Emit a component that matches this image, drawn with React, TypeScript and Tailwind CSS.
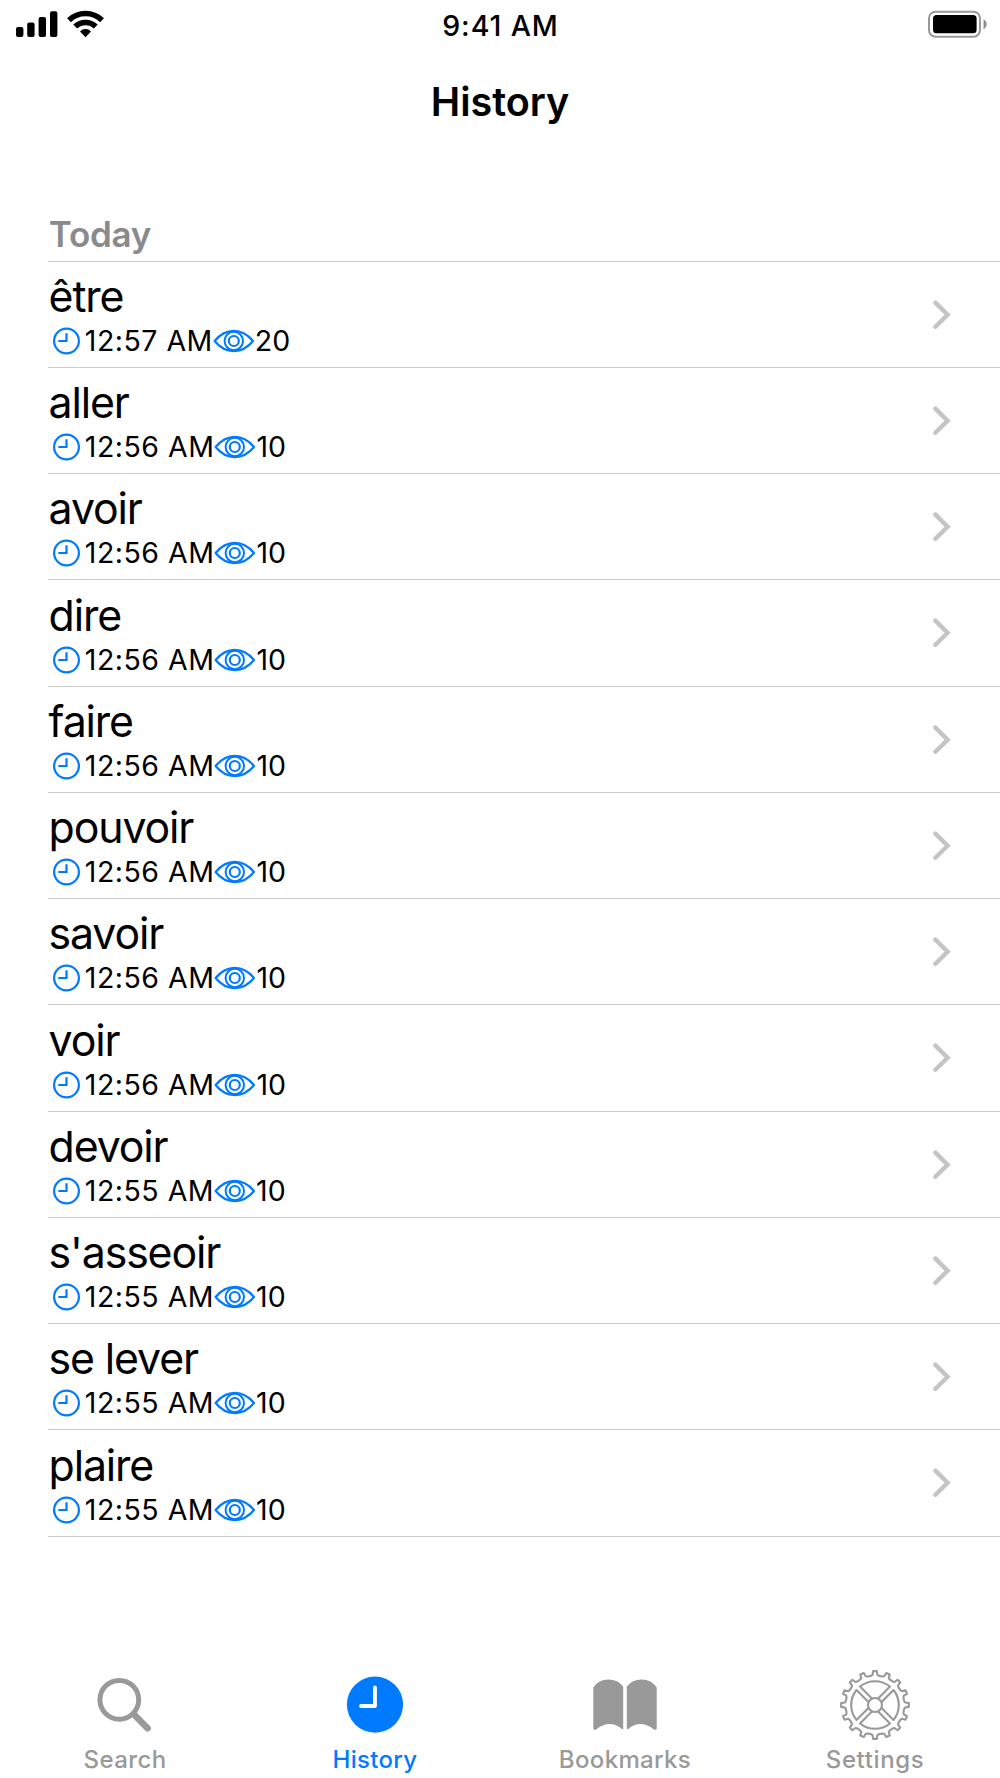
import React from "react";

type Entry = { word: string; time: string; views: number };

const entries: Entry[] = [
  { word: "être", time: "12:57 AM", views: 20 },
  { word: "aller", time: "12:56 AM", views: 10 },
  { word: "avoir", time: "12:56 AM", views: 10 },
  { word: "dire", time: "12:56 AM", views: 10 },
  { word: "faire", time: "12:56 AM", views: 10 },
  { word: "pouvoir", time: "12:56 AM", views: 10 },
  { word: "savoir", time: "12:56 AM", views: 10 },
  { word: "voir", time: "12:56 AM", views: 10 },
  { word: "devoir", time: "12:55 AM", views: 10 },
  { word: "s'asseoir", time: "12:55 AM", views: 10 },
  { word: "se lever", time: "12:55 AM", views: 10 },
  { word: "plaire", time: "12:55 AM", views: 10 },
];

function SignalIcon() {
  return (
    <svg width="42" height="28" viewBox="0 0 42 28" fill="#000">
      <rect x="0" y="17" width="7.4" height="10" rx="2" />
      <rect x="11.2" y="12.5" width="7.4" height="14.5" rx="2" />
      <rect x="22.6" y="7" width="7.4" height="20" rx="2" />
      <rect x="34" y="1.3" width="7.4" height="25.7" rx="2" />
    </svg>
  );
}

function WifiIcon() {
  return (
    <svg width="38" height="28" viewBox="0 0 38 28" fill="none" stroke="#000">
      <path d="M3 10.2A23.5 23.5 0 0 1 36 10.2" strokeWidth="5.6" />
      <path d="M9.2 16.6A14.8 14.8 0 0 1 29.8 16.6" strokeWidth="5.6" />
      <path d="M19.5 27.2L14 21.4Q16.2 19 19.5 19Q22.800 19 25 21.4Z" fill="#000" stroke="none" />
    </svg>
  );
}

function BatteryIcon() {
  return (
    <svg width="60" height="28" viewBox="0 0 60 28">
      <rect x="2" y="1.7" width="51" height="25" rx="6.5" fill="none" stroke="#999" strokeWidth="2" />
      <rect x="6" y="5" width="43.6" height="18.2" rx="3.5" fill="#000" />
      <path d="M56.5 9.2Q59.6 10.8 59.6 14.2Q59.6 17.6 56.5 19.2Z" fill="#8e8e8e" />
    </svg>
  );
}

function ClockIcon() {
  return (
    <svg width="28" height="28" viewBox="0 0 28 28" fill="none" stroke="#007aff" strokeWidth="2.2">
      <circle cx="13.5" cy="14" r="12.4" />
      <path d="M13.5 6.2V14H5.3" />
    </svg>
  );
}

function EyeIcon() {
  return (
    <svg width="42" height="24" viewBox="0 0 42 24" fill="none" stroke="#007aff" strokeWidth="2.2">
      <path d="M1.6 12C7.5 5 14 1.9 20.8 1.9S34.3 5 40 12C34.3 19 27.8 22.1 20.8 22.1S7.3 19 1.6 12Z" strokeLinejoin="round" />
      <circle cx="20.8" cy="12" r="9.2" strokeWidth="2" />
      <circle cx="20.8" cy="12" r="5" />
    </svg>
  );
}

function ChevronIcon() {
  return (
    <svg width="18" height="30" viewBox="0 0 18 30" fill="none" stroke="#c4c4c6" strokeWidth="4.4" strokeLinecap="round" strokeLinejoin="miter">
      <path d="M2.4 2.6L14.6 14.7L2.4 26.8" />
    </svg>
  );
}

function SearchIcon() {
  return (
    <svg width="72" height="72" viewBox="0 0 72 72" fill="none" stroke="#999">
      <circle cx="30.3" cy="30.8" r="19.4" strokeWidth="5" />
      <path d="M45 45.5L58.6 59.2" strokeWidth="6.6" strokeLinecap="round" />
    </svg>
  );
}

function HistoryIcon() {
  return (
    <svg width="72" height="72" viewBox="0 0 72 72" fill="none">
      <circle cx="36" cy="35.6" r="28.1" fill="#007aff" />
      <path d="M36 18.5V37H22" stroke="#fff" strokeWidth="3.8" strokeLinecap="round" strokeLinejoin="round" />
    </svg>
  );
}

function BookIcon() {
  return (
    <svg width="72" height="72" viewBox="0 0 72 72" fill="#999">
      <path d="M4.3 18.5Q9.5 10.4 19.3 10.4T34.2 17.5V60Q33.8 60.8 32.6 59.8Q27 55 20.8 55Q13.5 55 7.2 60.5Q4.3 61.3 4.3 59.2Z" />
      <path d="M67.7 18.5Q62.5 10.4 52.7 10.4T37.8 17.5V60Q38.2 60.8 39.4 59.8Q45 55 51.2 55Q58.5 55 64.8 60.5Q67.7 61.3 67.7 59.2Z" />
    </svg>
  );
}

const TEETH = 16;

/** Closed outline with evenly spaced teeth, starting from the top. */
const gearOutline = (() => {
  const corners: [number, number][] = [
    [-8, 29.4],
    [-4.6, 30.2],
    [-3.2, 33.9],
    [3.2, 33.9],
    [4.6, 30.2],
    [8, 29.4],
  ];
  const points: string[] = [];
  for (let i = 0; i < TEETH; i++) {
    for (const [offset, radius] of corners) {
      const angle = ((i * (360 / TEETH) + offset - 90) * Math.PI) / 180;
      points.push(`${(36 + radius * Math.cos(angle)).toFixed(2)} ${(36 + radius * Math.sin(angle)).toFixed(2)}`);
    }
  }
  return `M${points.join("L")}Z`;
})();

function GearIcon() {
  return (
    <svg width="72" height="72" viewBox="0 0 72 72" fill="none" stroke="#999" strokeWidth="2.1" strokeLinejoin="round">
      <path d={gearOutline} />
      <circle cx="36" cy="36" r="7" />
      {[0, 90, 180, 270].map((turn) => (
        <path
          key={turn}
          transform={`rotate(${turn} 36 36)`}
          d="M38.8 29.7L51 17.500A23.8 23.8 0 0 0 21 17.500L33.2 29.7"
        />
      ))}
    </svg>
  );
}

function HistoryRow({ word, time, views }: Entry) {
  return (
    <li className="flex h-[106.25px] items-start justify-between border-b border-[#cccccc] pr-[49px]">
      <div className="pt-[12.2px]">
        <div className="pl-[0.6px] text-[42.8px] leading-[46px] tracking-[-1.12px]">{word}</div>
        <div className="mt-[4px] flex h-[34px] items-center pl-[4.5px] text-[28.5px] leading-[34px] tracking-[0.5px]">
          <span className="w-[32.3px] shrink-0">
            <ClockIcon />
          </span>
          <span>{time}</span>
          <span className="shrink-0">
            <EyeIcon />
          </span>
          <span className="tracking-[0px]">{views}</span>
        </div>
      </div>
      <span className="mt-[38px]">
        <ChevronIcon />
      </span>
    </li>
  );
}

function Tab({ label, active, tracking, icon }: { label: string; active?: boolean; tracking: string; icon: React.ReactNode }) {
  return (
    <button className={`flex flex-col items-center ${active ? "text-[#007aff]" : "text-[#999999]"}`}>
      {icon}
      <span className={`mt-[5px] text-[24px] leading-[28px] font-medium ${tracking}`}>{label}</span>
    </button>
  );
}

export default function App() {
  return (
    <div className="flex h-[1778px] w-[1000px] flex-col overflow-hidden bg-white font-['Inter',sans-serif] text-black">
      <header>
        <div className="grid h-[50px] grid-cols-3 items-start px-[13px] pt-[10px] pl-[16px]">
          <div className="flex gap-[8px]">
            <SignalIcon />
            <WifiIcon />
          </div>
          <div className="mt-[-1px] pr-[2px] text-center text-[28.5px] leading-[34px] font-medium tracking-[0.9px]">9:41 AM</div>
          <div className="flex justify-end">
            <BatteryIcon />
          </div>
        </div>
        <h1 className="mt-[28px] text-center text-[39.5px] leading-[48px] font-semibold tracking-[-0.05px]">History</h1>
      </header>

      <main className="flex-1 pt-[86px] pl-[48px]">
        <h2 className="h-[49.6px] border-b border-[#cccccc] pl-[0.8px] text-[35px] leading-[44px] font-semibold tracking-[-0.25px] text-[#8a8a8d]">
          Today
        </h2>
        <ul>
          {entries.map((entry) => (
            <HistoryRow key={entry.word} {...entry} />
          ))}
        </ul>
      </main>

      <nav className="grid h-[109px] shrink-0 grid-cols-4">
        <Tab label="Search" tracking="tracking-[0.4px]" icon={<SearchIcon />} />
        <Tab label="History" tracking="tracking-[0.3px]" active icon={<HistoryIcon />} />
        <Tab label="Bookmarks" tracking="tracking-[0.35px]" icon={<BookIcon />} />
        <Tab label="Settings" tracking="tracking-[0.6px]" icon={<GearIcon />} />
      </nav>
    </div>
  );
}
